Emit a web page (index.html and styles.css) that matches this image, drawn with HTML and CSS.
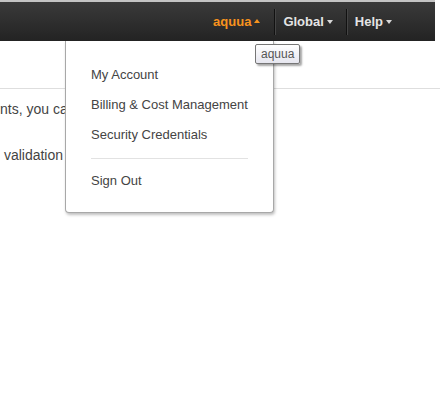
FILE: index.html
```html
<!DOCTYPE html>
<html lang="en">
<head>
    <meta charset="UTF-8">
    <title>Console</title>
    <link rel="stylesheet" href="styles.css">
</head>
<body>
    <div class="topbar">
        <div class="nav">
            <div class="nav-item active"><span>aquua</span><span class="caret up"></span></div>
            <div class="nav-item"><span>Global</span><span class="caret"></span></div>
            <div class="nav-item"><span>Help</span><span class="caret"></span></div>
        </div>
    </div>

    <div class="page">
        <div class="page-rule"></div>
        <p class="line-one">nts, you can manage</p>
        <p class="line-two">&nbsp;validation of your</p>
    </div>

    <div class="dropdown">
        <div class="menu-item">My Account</div>
        <div class="menu-item">Billing &amp; Cost Management</div>
        <div class="menu-item">Security Credentials</div>
        <div class="divider"></div>
        <div class="menu-item">Sign Out</div>
    </div>

    <div class="tooltip">aquua</div>
</body>
</html>
```

FILE: styles.css
```css
body {
    margin: 0;
    font-family: "Liberation Sans", Arial, sans-serif;
    background: #fff;
    overflow: hidden;
}
.topbar {
    width: 435px;
    height: 39px;
    border-top: 2px solid #c4c4c4;
    background: linear-gradient(#3a3a3a, #232323);
    display: flex;
    justify-content: flex-end;
}
.nav {
    display: flex;
    align-items: center;
    padding-right: 30px;
}
.nav-item {
    font-size: 13px;
    font-weight: bold;
    color: #e4e4e4;
    padding: 0 13px 0 8px;
    height: 26px;
    line-height: 26px;
    display: flex;
    align-items: center;
    gap: 3px;
    border-left: 1px solid #111;
    box-shadow: inset 1px 0 0 #444;
}
.nav-item:first-child {
    border-left: none;
    box-shadow: none;
}
.nav-item.active {
    color: #f7931e;
    padding-right: 14px;
}
.caret {
    width: 0;
    height: 0;
    border-left: 3.5px solid transparent;
    border-right: 3.5px solid transparent;
    border-top: 4px solid #d8d8d8;
    margin-top: 1px;
}
.caret.up {
    border-top: none;
    border-bottom: 4px solid #f7931e;
    margin-top: -1px;
}
.page {
    color: #444;
    font-size: 14px;
}
.page-rule {
    height: 1px;
    background: #dedede;
    margin-top: 47px;
}
.page p {
    margin: 0;
    white-space: nowrap;
}
.line-one {
    padding-top: 12px;
    line-height: 16px;
}
.line-two {
    padding-top: 30px;
    line-height: 16px;
}
.dropdown {
    position: absolute;
    left: 65px;
    top: 41px;
    width: 207px;
    padding: 19px 0 16px;
    background: #fff;
    border: 1px solid #a8a8a8;
    border-top: none;
    border-radius: 0 0 4px 4px;
    box-shadow: 1px 2px 3px rgba(0, 0, 0, 0.25);
}
.menu-item {
    font-size: 13px;
    color: #444;
    line-height: 30px;
    padding-left: 25px;
}
.divider {
    height: 1px;
    background: #e2e2e2;
    margin: 8px 25px 7px;
}
.tooltip {
    position: absolute;
    left: 255px;
    top: 44px;
    height: 18px;
    line-height: 18px;
    padding: 0 5px;
    font-size: 12px;
    color: #555;
    background: linear-gradient(#fff, #e6e6ef);
    border: 1px solid #767676;
    border-radius: 2px;
    box-shadow: 2px 2px 2px rgba(0, 0, 0, 0.35);
}
```
